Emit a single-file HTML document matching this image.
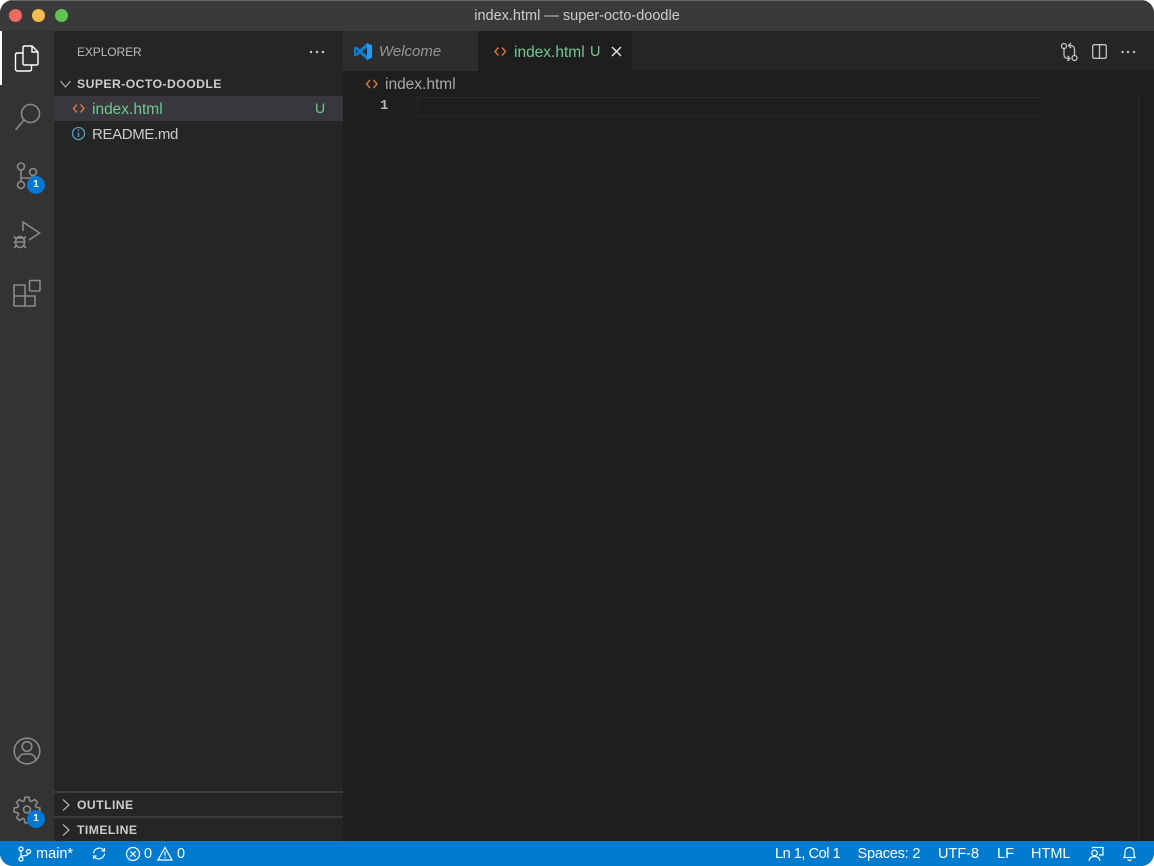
<!DOCTYPE html>
<html><head><meta charset="utf-8">
<style>
html,body{margin:0;padding:0;width:1154px;height:866px;overflow:hidden;background:#fff}
*{box-sizing:border-box}
#w{position:absolute;left:0;top:0;width:1154px;height:866px;background:#1e1e1e;border-radius:13px;overflow:hidden;font-family:"Liberation Sans",sans-serif;color:#ccc;filter:blur(.3px)}
.a{position:absolute;white-space:nowrap}
svg{position:absolute;overflow:visible}
.s{fill:none;stroke:#8a8a8a;stroke-width:1.6}
.w{fill:none;stroke:#fff;stroke-width:1.4}
.t{font-size:15.5px;line-height:18px}
.b{font-weight:bold;font-size:12.2px;letter-spacing:.45px;color:#ccc;line-height:16px}
.badge{position:absolute;width:18px;height:18px;border-radius:9px;background:#0078d4;color:#fff;font-size:10px;font-weight:bold;text-align:center;line-height:18px}
.st{line-height:17px}
</style></head><body>
<div id="w">
<!-- title bar -->
<div class="a" style="left:0;top:0;width:1154px;height:31px;background:#3a3a3a;border-top:1px solid #6a6a6a"></div>
<div class="a" style="left:9px;top:9px;width:13px;height:13px;border-radius:50%;background:#ee6a5f"></div>
<div class="a" style="left:32px;top:9px;width:13px;height:13px;border-radius:50%;background:#f5bd4f"></div>
<div class="a" style="left:55px;top:9px;width:13px;height:13px;border-radius:50%;background:#61c454"></div>
<div class="a" style="left:0;top:8px;width:1154px;text-align:center;font-size:14.500px;line-height:17px;color:#ccc">index.html — super-octo-doodle</div>

<!-- activity bar -->
<div class="a" style="left:0;top:31px;width:54px;height:810px;background:#333"></div>
<div class="a" style="left:0;top:31px;width:2px;height:54px;background:#fff"></div>
<svg style="left:0;top:0" width="54" height="841">
<path class="w" d="M23 53V47.500Q23 46 24.500 46H32L38 52V63.500Q38 65 36.500 65H31.500M32 46V52H38"/>
<path class="w" d="M23 53H17.500Q15.500 53 15.500 55V69Q15.500 71 17.500 71H29.500Q31.500 71 31.500 69V65H24.500Q23 65 23 63.500Z"/>
<circle class="s" cx="30.500" cy="113.500" r="9"/><path class="s" d="M24 120L15.500 130"/>
<circle class="s" cx="21" cy="166.500" r="3.500"/><circle class="s" cx="21" cy="185" r="3.500"/><circle class="s" cx="33" cy="172" r="3.500"/>
<path class="s" d="M21 170V181.500M21 178H28Q33 178 33 175.500"/>
<path class="s" d="M23 231V222L39.500 233L29 240"/>
<ellipse class="s" cx="20" cy="242" rx="4.500" ry="5.500"/><path class="s" d="M14 236.500L16.500 239M26 236.500L23.500 239M13.500 242H25.500M14 248L16.500 245.500M26 248L23.500 245.500M15.500 238H24.500"/>
<path class="s" d="M14.500 285H25V306H14.500Q14 306 14 305.500V285.500Q14 285 14.500 285ZM14 296H35V305.500Q35 306 34.500 306H25"/>
<rect class="s" x="29.500" y="280.500" width="10.500" height="10.500" rx="1"/>
<circle class="s" cx="27" cy="751" r="12.800"/><circle class="s" cx="27" cy="746.500" r="4.800"/><path class="s" d="M18 760.500Q19 754.500 24 754H30Q35 754.500 36 760.500"/>
<g transform="translate(27,810)">
<path class="s" d="M2.800 -9.100L2 -12.850H-2L-2.800 -9.100L-4.450 -8.410L-7.670 -10.500L-10.500 -7.670L-8.410 -4.450L-9.100 -2.800L-12.850 -2V2L-9.100 2.800L-8.410 4.450L-10.500 7.670L-7.670 10.500L-4.450 8.410L-2.800 9.100L-2 12.850H2L2.800 9.100L4.450 8.410L7.670 10.500L10.500 7.670L8.410 4.450L9.100 2.800L12.850 2V-2L9.100 -2.800L8.410 -4.450L10.500 -7.670L7.670 -10.500L4.450 -8.410Z"/>
<circle class="s" cx="0" cy="-.5" r="3.500"/>
</g>
</svg>
<div class="badge" style="left:27px;top:176px">1</div>
<div class="badge" style="left:27px;top:810px">1</div>

<!-- sidebar -->
<div class="a" style="left:54px;top:31px;width:289px;height:810px;background:#252526"></div>
<div class="a" style="left:77px;top:44px;font-size:12px;letter-spacing:-.1px;line-height:16px;color:#bbb">EXPLORER</div>
<svg style="left:0;top:0" width="343" height="841">
<g fill="#ccc"><circle cx="311" cy="52" r="1.200"/><circle cx="317" cy="52" r="1.200"/><circle cx="323" cy="52" r="1.200"/></g>
<path fill="none" stroke="#b0b0b0" stroke-width="1.200" d="M60.500 81L65.500 87L70.500 81"/>
<path fill="none" stroke="#b0b0b0" stroke-width="1.200" d="M63 799.500L69 805L63 810.500M63 824.500L69 830L63 835.500"/>
</svg>
<div class="a b" style="left:77px;top:76px">SUPER-OCTO-DOODLE</div>
<div class="a" style="left:54px;top:96px;width:289px;height:25px;background:#37373d"></div>
<svg style="left:0;top:0" width="343" height="150">
<path fill="none" stroke="#d4743a" stroke-width="1.500" d="M77 104.500L73.500 108.500L77 112.500M80.500 104.500L84 108.500L80.500 112.500"/>
<circle cx="78.500" cy="133.500" r="6" fill="none" stroke="#519aba" stroke-width="1.300"/>
<path stroke="#519aba" stroke-width="1.500" d="M78.500 132.500V137M78.500 129.500V131"/>
</svg>
<div class="a t" style="left:92px;top:101px;color:#73c991">index.html</div>
<div class="a" style="left:315px;top:100px;font-size:14px;line-height:17px;color:#73c991">U</div>
<div class="a t" style="left:92px;top:126px;color:#ccc;font-size:15px;letter-spacing:-.35px">README.md</div>
<div class="a" style="left:54px;top:791px;width:289px;height:2px;background:#3b3b3c"></div>
<div class="a" style="left:54px;top:816px;width:289px;height:2px;background:#3b3b3c"></div>
<div class="a b" style="left:77px;top:797px">OUTLINE</div>
<div class="a b" style="left:77px;top:822px">TIMELINE</div>

<!-- tabs -->
<div class="a" style="left:343px;top:31px;width:811px;height:40px;background:#252526"></div>
<div class="a" style="left:343px;top:31px;width:135px;height:40px;background:#2d2d2d"></div>
<div class="a" style="left:478px;top:31px;width:154px;height:40px;background:#1e1e1e"></div>
<svg style="left:0;top:0" width="1154" height="125">
<path fill="#0a7fd0" fill-rule="evenodd" d="M367 43L372 45.500V57.500L367 60L360 53.800L356 56.500L354 55.500V47.500L356 46.500L360 49.200ZM367 47.500L362 51.500L367 55.500ZM356 49.500V53.500L358 51.500Z"/>
<path fill="#1f9cf0" d="M367 43L372 45.500V57.500L367 60V47.500Z"/>
<path fill="none" stroke="#d4743a" stroke-width="1.500" d="M498.500 47.500L495 51.500L498.500 55.500M502 47.500L505.500 51.500L502 55.500"/>
<path fill="none" stroke="#ddd" stroke-width="1.500" d="M612 47L621 56M621 47L612 56"/>
<path fill="none" stroke="#d4743a" stroke-width="1.500" d="M370 80L366.500 84L370 88M373.500 80L377 84L373.500 88"/>
<g fill="none" stroke="#c2c2c2" stroke-width="1.300">
<circle cx="1064" cy="46" r="2.500"/><circle cx="1074.500" cy="58" r="2.500"/>
<path d="M1064 48.500V54.500Q1064 58 1067.500 58.500H1069.500M1067.500 56L1070 58.500L1067.500 61"/>
<path d="M1074.500 55.500V49.500Q1074.500 46 1071 45.500H1069M1071 43L1068.500 45.500L1071 48"/>
<rect x="1092.700" y="44.700" width="13.600" height="13.600" rx="1.500"/><path d="M1099.500 44.700V58.300"/>
</g>
<g fill="#c2c2c2"><circle cx="1122.500" cy="52" r="1.200"/><circle cx="1128" cy="52" r="1.200"/><circle cx="1134" cy="52" r="1.200"/></g>
</svg>
<div class="a t" style="left:379px;top:43px;font-size:15px;font-style:italic;color:#969696">Welcome</div>
<div class="a t" style="left:514px;top:44px;color:#73c991">index.html</div>
<div class="a" style="left:590px;top:44px;font-size:14.500px;line-height:17px;color:#73c991">U</div>
<div class="a t" style="left:385px;top:76px;color:#a9a9a9">index.html</div>

<!-- editor -->
<div class="a" style="left:380px;top:97px;font-family:'Liberation Mono',monospace;font-size:14px;font-weight:bold;line-height:18px;color:#b8b8b8">1</div>
<div class="a" style="left:417px;top:97px;width:626px;height:19px;border:1px solid #282828;border-top-color:#292929;border-right:0"></div>
<div class="a" style="left:1138px;top:96px;width:1px;height:745px;background:#2b2b2b"></div>

<!-- status bar -->
<div class="a" style="left:0;top:841px;width:1154px;height:25px;background:#007acc"></div>
<svg style="left:0;top:0" width="1154" height="866">
<g fill="none" stroke="#fff" stroke-width="1.200">
<circle cx="21" cy="849" r="2"/><circle cx="21" cy="859" r="2"/><circle cx="28.500" cy="851.500" r="2"/><path d="M21 851V857M21 856Q28 856 28.500 853.500"/>
<path d="M93.500 853.500A5.800 5.800 0 0 1 104 850.500M104.500 853.500A5.800 5.800 0 0 1 94 856.500M101.500 851H104.500V848M96.500 856H93.500V859"/>
<circle cx="133" cy="854" r="6.500"/><path d="M130.300 851.300L135.700 856.700M135.700 851.300L130.300 856.700"/>
<path d="M165 847.500L172 860H158Z"/><path d="M165 851.500V855.500M165 856.800V858"/>
<circle cx="1094.500" cy="853" r="2.800"/><path d="M1089 861Q1089.500 856.500 1094.500 856.500Q1099.500 856.500 1100 861M1092.500 848.500V847.500H1103V855H1099"/>
<path d="M1124 857.500Q1125 856 1125 852Q1125 847.500 1129.500 847.500Q1134 847.500 1134 852Q1134 856 1135 857.500ZM1127.500 859.500Q1129.500 861.500 1131.500 859.500"/>
</g>
</svg>
<div class="a" style="left:0;top:0;height:866px;width:1154px;font-size:14.500px;color:#fff">
<span class="a st" style="left:36px;top:846px">main*</span>
<span class="a st" style="left:144px;top:846px">0</span>
<span class="a st" style="left:177px;top:846px">0</span>
<span class="a st" style="left:775px;top:846px;letter-spacing:-.45px">Ln 1, Col 1</span>
<span class="a st" style="left:857.500px;top:846px;letter-spacing:-.2px">Spaces: 2</span>
<span class="a st" style="left:938px;top:846px">UTF-8</span>
<span class="a st" style="left:997px;top:846px">LF</span>
<span class="a st" style="left:1031px;top:846px">HTML</span>
</div>
</div>
</body></html>
